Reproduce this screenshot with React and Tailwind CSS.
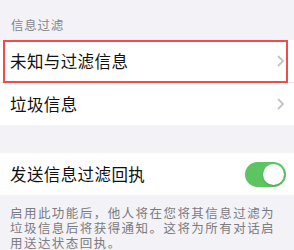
import React from "react";

const font = { fontFamily: '"Noto Sans CJK SC", "Noto Sans", sans-serif' };

function Chevron() {
  return (
    <svg width="8" height="12" viewBox="0 0 8 12" className="shrink-0">
      <polyline points="1.5,1.5 6,6 1.5,10.5" fill="none" stroke="#c5c5c9" strokeWidth="1.8" strokeLinecap="round" strokeLinejoin="round" />
    </svg>
  );
}

export default function App() {
  return (
    <div className="w-[294px] h-[250px] overflow-hidden bg-[#f2f2f7]" style={font}>
      <div className="h-[40px] flex items-end pl-[11px] pb-[7px] text-[12.5px] leading-[16px] tracking-[0.75px] text-[#86868b]">
        信息过滤
      </div>
      <div className="bg-white">
        <div className="relative h-[43px] flex items-center justify-between pl-[10px] pr-[9px] border-b border-[#e3e3e8]">
          <span className="text-[16.5px] tracking-[0.4px] text-[#111]">未知与过滤信息</span>
          <Chevron />
          <div className="absolute left-[3px] right-[6px] top-0 bottom-[-1px] border-2 border-[#f24b4b] pointer-events-none" />
        </div>
        <div className="h-[42px] flex items-center justify-between pl-[10px] pr-[9px]">
          <span className="text-[16.5px] tracking-[0.4px] text-[#111]">垃圾信息</span>
          <Chevron />
        </div>
      </div>
      <div className="h-[28px]" />
      <div className="bg-white h-[42px] flex items-center justify-between pl-[10px] pr-[8px]">
        <span className="text-[16.5px] tracking-[0.4px] text-[#111]">发送信息过滤回执</span>
        <div className="w-[41px] h-[25px] rounded-full bg-[#5ec462] flex items-center justify-end pr-[2px]">
          <div className="w-[21px] h-[21px] rounded-full bg-white shadow-[0_1px_2px_rgba(0,0,0,0.2)]" />
        </div>
      </div>
      <div className="pl-[10px] pt-[10px] text-[12.5px] leading-[15px] tracking-[1.45px] text-[#7b7b80] whitespace-nowrap">
        启用此功能后，他人将在您将其信息过滤为<br />
        垃圾信息后将获得通知。这将为所有对话启<br />
        用送达状态回执。
      </div>
    </div>
  );
}
